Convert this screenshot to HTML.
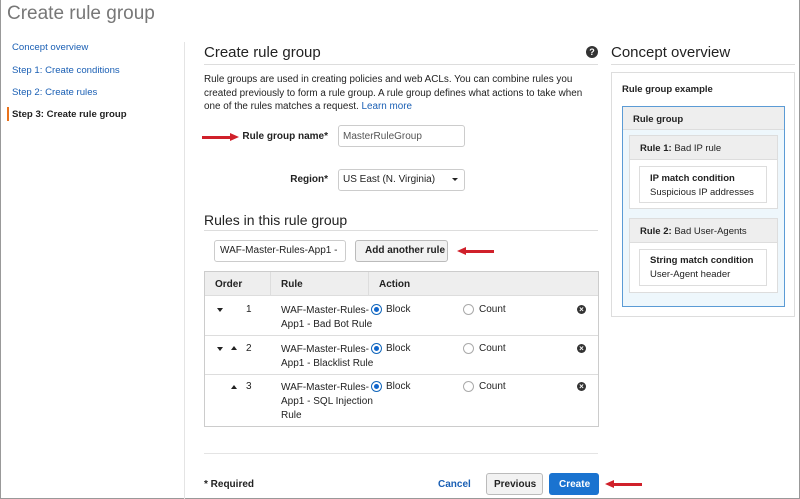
<!DOCTYPE html>
<html><head><meta charset="utf-8"><style>
*{margin:0;padding:0;box-sizing:border-box}
body{width:800px;height:499px;background:#fff;font-family:"Liberation Sans",Arial,sans-serif;font-size:10px;color:#222;position:relative;overflow:hidden}
.a{position:absolute;white-space:nowrap}
.lnk{color:#1a5fb4}
.b{font-weight:bold}
.box{position:absolute;border:1px solid #ccc}
.arrow{position:absolute;height:3px;background:#d0202a}
.rad{position:absolute;width:11px;height:11px;border-radius:50%;border:1px solid #aaa;background:#fff}
.rad.on{border-color:#1166bb}
.rad.on::after{content:"";position:absolute;left:2px;top:2px;width:5px;height:5px;border-radius:50%;background:#1166cc}
.x{position:absolute;width:9px;height:9px;border-radius:50%;background:#333;color:#fff;font-size:8px;line-height:9px;text-align:center;font-weight:bold}
.tri{position:absolute;width:0;height:0;border-left:3.5px solid transparent;border-right:3.5px solid transparent}
.dn{border-top:4px solid #222}.up{border-bottom:4px solid #222}
.t{font-size:10px}
</style></head><body>
<div style="position:absolute;left:0;top:0;width:800px;height:499px;border:1px solid #999;border-top:none"></div>
<div class="a" style="left:7px;top:3px;font-size:19px;color:#777">Create rule group</div>

<div class="a lnk" style="left:12px;top:42px;font-size:9.6px">Concept overview</div>
<div class="a lnk" style="left:12px;top:65px;font-size:9.6px">Step 1: Create conditions</div>
<div class="a lnk" style="left:12px;top:87px;font-size:9.6px">Step 2: Create rules</div>
<div style="position:absolute;left:7px;top:107px;width:2px;height:14px;background:#e8721c"></div>
<div class="a b" style="left:12px;top:109px;font-size:9.6px">Step 3: Create rule group</div>
<div style="position:absolute;left:184px;top:42px;width:1px;height:457px;background:#e4e4e4"></div>

<div class="a" style="left:204px;top:44px;font-size:15px">Create rule group</div>
<div style="position:absolute;left:204px;top:64px;width:394px;height:1px;background:#ddd"></div>
<div class="a" style="left:586px;top:46px;width:12px;height:12px;border-radius:50%;background:#333;color:#fff;font-size:9px;font-weight:bold;text-align:center;line-height:12px">?</div>
<div class="a" style="left:204px;top:73px;font-size:9.9px;line-height:13.6px;white-space:normal;width:385px">Rule groups are used in creating policies and web ACLs. You can combine rules you created previously to form a rule group. A rule group defines what actions to take when one of the rules matches a request. <span class="lnk">Learn more</span></div>

<div class="arrow" style="left:202px;top:136px;width:30px"></div>
<div class="tri" style="left:230px;top:133px;border:0;border-top:4.5px solid transparent;border-bottom:4.5px solid transparent;border-left:9px solid #d0202a"></div>
<div class="a b t" style="left:200px;width:128px;text-align:right;top:131px">Rule group name*</div>
<div class="box" style="left:338px;top:125px;width:127px;height:22px;border-radius:3px"></div>
<div class="a t" style="left:343px;top:131px;color:#555">MasterRuleGroup</div>
<div class="a b t" style="left:200px;width:128px;text-align:right;top:174px">Region*</div>
<div class="box" style="left:338px;top:169px;width:127px;height:22px;border-radius:3px"></div>
<div class="a t" style="left:343px;top:174px">US East (N. Virginia)</div>
<div class="tri dn" style="left:452px;top:178px;border-top-width:3px"></div>

<div class="a" style="left:204px;top:212px;font-size:14px">Rules in this rule group</div>
<div style="position:absolute;left:204px;top:230px;width:394px;height:1px;background:#ddd"></div>
<div class="box" style="left:214px;top:240px;width:132px;height:22px;border-radius:3px"></div>
<div class="a t" style="left:220px;top:245px">WAF-Master-Rules-App1 -</div>
<div class="box" style="left:355px;top:240px;width:93px;height:22px;border-radius:3px;background:#f2f2f2;border-color:#bbb"></div>
<div class="a b t" style="left:365px;top:245px">Add another rule</div>
<div class="arrow" style="left:466px;top:250px;width:28px"></div>
<div class="tri" style="left:457px;top:247px;border:0;border-top:4.5px solid transparent;border-bottom:4.5px solid transparent;border-right:9px solid #d0202a"></div>

<div class="box" style="left:204px;top:271px;width:395px;height:156px"></div>
<div style="position:absolute;left:205px;top:272px;width:393px;height:24px;background:#eee;border-bottom:1px solid #ddd"></div>
<div style="position:absolute;left:270px;top:272px;width:1px;height:24px;background:#ddd"></div>
<div style="position:absolute;left:368px;top:272px;width:1px;height:24px;background:#ddd"></div>
<div class="a b t" style="left:215px;top:279px">Order</div>
<div class="a b t" style="left:281px;top:279px">Rule</div>
<div class="a b t" style="left:379px;top:279px">Action</div>
<div style="position:absolute;left:205px;top:335px;width:393px;height:1px;background:#ddd"></div>
<div style="position:absolute;left:205px;top:374px;width:393px;height:1px;background:#ddd"></div>

<div class="tri dn" style="left:217px;top:308px"></div>
<div class="a t" style="left:246px;top:304px">1</div>
<div class="a t" style="left:281px;top:304px;line-height:14px">WAF-Master-Rules-<br>App1 - Bad Bot Rule</div>
<div class="tri dn" style="left:217px;top:347px"></div>
<div class="tri up" style="left:231px;top:346px"></div>
<div class="a t" style="left:246px;top:343px">2</div>
<div class="a t" style="left:281px;top:343px;line-height:14px">WAF-Master-Rules-<br>App1 - Blacklist Rule</div>
<div class="tri up" style="left:231px;top:385px"></div>
<div class="a t" style="left:246px;top:381px">3</div>
<div class="a t" style="left:281px;top:381px;line-height:14px">WAF-Master-Rules-<br>App1 - SQL Injection<br>Rule</div>

<div class="rad on" style="left:371px;top:304px"></div><div class="a t" style="left:386px;top:304px">Block</div>
<div class="rad" style="left:463px;top:304px"></div><div class="a t" style="left:479px;top:304px">Count</div>
<div class="x" style="left:577px;top:305px">×</div>
<div class="rad on" style="left:371px;top:343px"></div><div class="a t" style="left:386px;top:343px">Block</div>
<div class="rad" style="left:463px;top:343px"></div><div class="a t" style="left:479px;top:343px">Count</div>
<div class="x" style="left:577px;top:344px">×</div>
<div class="rad on" style="left:371px;top:381px"></div><div class="a t" style="left:386px;top:381px">Block</div>
<div class="rad" style="left:463px;top:381px"></div><div class="a t" style="left:479px;top:381px">Count</div>
<div class="x" style="left:577px;top:382px">×</div>

<div style="position:absolute;left:204px;top:453px;width:394px;height:1px;background:#e4e4e4"></div>
<div class="a b t" style="left:204px;top:479px">* Required</div>
<div class="a b lnk t" style="left:438px;top:479px">Cancel</div>
<div class="box" style="left:486px;top:473px;width:57px;height:22px;border-radius:3px;background:#f2f2f2;border-color:#bbb"></div>
<div class="a b t" style="left:494px;top:479px">Previous</div>
<div class="a" style="left:549px;top:473px;width:50px;height:22px;border-radius:3px;background:#1a73d0"></div>
<div class="a b t" style="left:559px;top:479px;color:#fff">Create</div>
<div class="arrow" style="left:614px;top:483px;width:28px"></div>
<div class="tri" style="left:605px;top:480px;border:0;border-top:4.5px solid transparent;border-bottom:4.5px solid transparent;border-right:9px solid #d0202a"></div>

<div class="a" style="left:611px;top:44px;font-size:15px">Concept overview</div>
<div style="position:absolute;left:611px;top:64px;width:184px;height:1px;background:#ddd"></div>
<div class="box" style="left:611px;top:72px;width:184px;height:245px;border-color:#ddd"></div>
<div class="a b" style="left:622px;top:84px;font-size:9.5px">Rule group example</div>
<div class="a" style="left:622px;top:106px;width:163px;height:201px;background:#eef7fc;border:1px solid #5b9bd5"></div>
<div class="a" style="left:623px;top:107px;width:161px;height:23px;background:#eee;border-bottom:1px solid #ddd"></div>
<div class="a b" style="left:633px;top:114px;font-size:9.5px">Rule group</div>
<div class="box" style="left:629px;top:135px;width:149px;height:74px;background:#fff;border-color:#ddd"></div>
<div class="a" style="left:630px;top:136px;width:147px;height:24px;background:#eee;border-bottom:1px solid #ddd"></div>
<div class="a" style="left:640px;top:143px;font-size:9.5px"><b>Rule 1:</b> Bad IP rule</div>
<div class="box" style="left:639px;top:166px;width:128px;height:37px;border-color:#ddd"></div>
<div class="a b" style="left:650px;top:173px;font-size:9.5px">IP match condition</div>
<div class="a" style="left:650px;top:187px;font-size:9.5px">Suspicious IP addresses</div>
<div class="box" style="left:629px;top:218px;width:149px;height:75px;background:#fff;border-color:#ddd"></div>
<div class="a" style="left:630px;top:219px;width:147px;height:24px;background:#eee;border-bottom:1px solid #ddd"></div>
<div class="a" style="left:640px;top:226px;font-size:9.5px"><b>Rule 2:</b> Bad User-Agents</div>
<div class="box" style="left:639px;top:249px;width:128px;height:37px;border-color:#ddd"></div>
<div class="a b" style="left:650px;top:255px;font-size:9.5px">String match condition</div>
<div class="a" style="left:650px;top:269px;font-size:9.5px">User-Agent header</div>
</body></html>
